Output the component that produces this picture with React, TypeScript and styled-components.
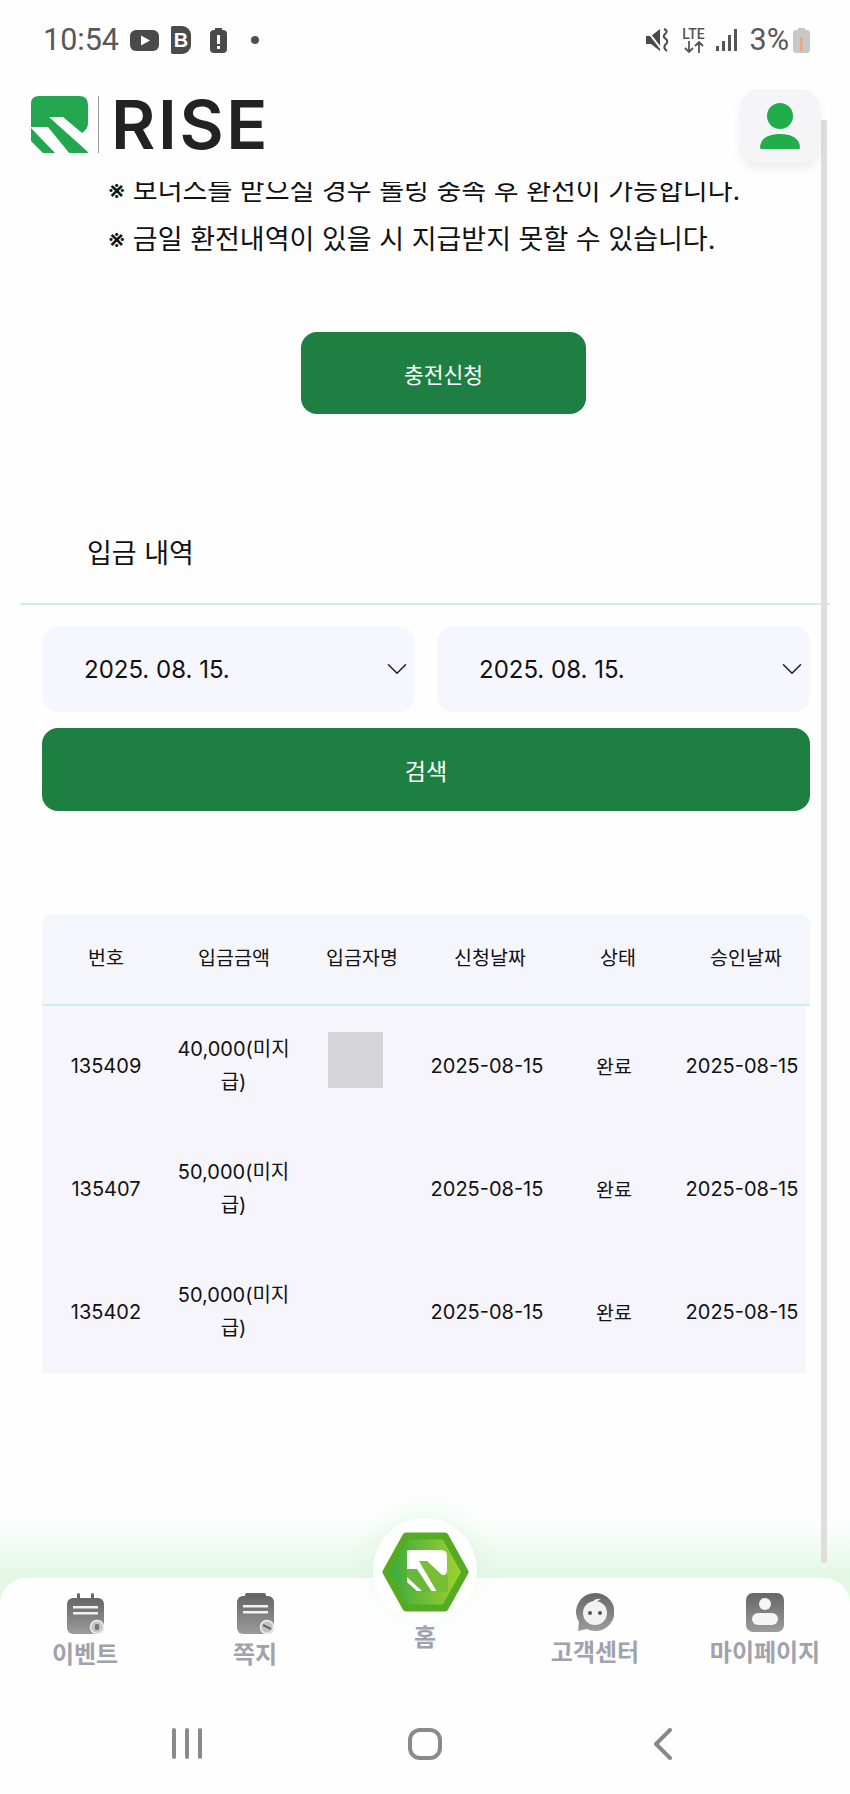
import React from "react";
import styled, { createGlobalStyle } from "styled-components";
import { ChevronDown } from "lucide-react";

const FONT = `"Inter", "Noto Sans CJK KR", sans-serif`;

const GlobalStyle = createGlobalStyle`
	html, body {
		margin: 0;
		padding: 0;
		background: #fefefe;
	}
	* {
		box-sizing: border-box;
	}
`;

const Page = styled.div`
	position: relative;
	width: 850px;
	height: 1794px;
	display: flex;
	flex-direction: column;
	overflow: hidden;
	background: #fefefe;
	font-family: ${FONT};
	color: #111;
`;

const StatusBar = styled.div`
	height: 75px;
	flex: none;
	display: flex;
	align-items: center;
	justify-content: space-between;
	padding: 5px 40px 0 43px;
	color: #555;
`;

const StatusGroup = styled.div`
	display: flex;
	align-items: center;
`;

const StatusText = styled.span<{ $gap?: number }>`
	font-family: "Roboto", sans-serif;
	font-size: 30.5px;
	line-height: 34px;
	color: #585858;
	margin-left: ${(props) => props.$gap || 0}px;
`;

const StatusIcon = styled.svg<{ $gap?: number }>`
	display: block;
	flex: none;
	margin-left: ${(props) => props.$gap || 0}px;
`;

const AppBadge = styled.span`
	width: 20px;
	height: 28px;
	margin-left: 12px;
	display: flex;
	align-items: center;
	justify-content: center;
	background: #4a4a4a;
	border-radius: 2px 9px 9px 2px;
	font-family: "Liberation Sans", sans-serif;
	font-size: 20px;
	font-weight: 700;
	color: #fff;
`;

const LteStack = styled.div`
	width: 24px;
	margin-left: 12px;
	display: flex;
	flex-direction: column;
	align-items: center;
`;

const LteText = styled.span`
	font-family: "Roboto", sans-serif;
	font-size: 14px;
	font-weight: 500;
	line-height: 13px;
	color: #555;
`;

const Header = styled.header`
	height: 107px;
	flex: none;
	display: flex;
	align-items: flex-start;
	justify-content: space-between;
	padding: 14px 30px 0 31px;
	position: relative;
	z-index: 2;
`;

const Logo = styled.div`
	display: flex;
	align-items: center;
	margin-top: 7px;
`;

const LogoDivider = styled.div`
	width: 1px;
	height: 57px;
	margin: 0 12px 0 10px;
	background: #999;
`;

const LogoWord = styled.span`
	font-family: "Inter", sans-serif;
	font-size: 68px;
	line-height: 57px;
	font-weight: 600;
	letter-spacing: 2.6px;
	color: #222;
`;

const ProfileButton = styled.div`
	width: 80px;
	height: 74px;
	display: flex;
	align-items: center;
	justify-content: center;
	background: #f5f5f8;
	border-radius: 20px;
	box-shadow: 0 6px 10px rgba(0, 0, 0, 0.07);
`;

const Main = styled.main`
	flex: 1;
	min-height: 0;
	overflow: hidden;
`;

const Notice = styled.div`
	margin-top: -16px;
	padding-left: 108px;
	font-size: 27px;
	line-height: 49px;
	color: #111;
`;

const ChargeButton = styled.div`
	width: 285px;
	height: 82px;
	margin: 68px 0 0 301px;
	display: flex;
	align-items: center;
	justify-content: center;
	background: #1e7f43;
	border-radius: 16px;
	color: #fff;
	font-size: 21.5px;
`;

const SectionTitle = styled.div`
	margin: 120px 20px 0;
	padding: 0 0 29px 67px;
	border-bottom: 2px solid #cfeee4;
	font-size: 27px;
	line-height: 40px;
	color: #111;
`;

const Filters = styled.div`
	margin: 21px 40px 0 42px;
	display: grid;
	grid-template-columns: 373px 373px;
	justify-content: space-between;
`;

const DateSelect = styled.div`
	height: 86px;
	padding: 0 1px 0 42px;
	display: flex;
	align-items: center;
	justify-content: space-between;
	background: #f6f6fe;
	border-radius: 16px;
	font-size: 24px;
	color: #111;
`;

const SearchButton = styled.div`
	height: 83px;
	margin: 16px 40px 0 42px;
	display: flex;
	align-items: center;
	justify-content: center;
	background: #1e7f43;
	border-radius: 16px;
	color: #fff;
	font-size: 23px;
`;

const Table = styled.div`
	margin: 103px 0 0 42px;
	font-size: 20px;
`;

const TableHead = styled.div`
	width: 768px;
	height: 92px;
	display: grid;
	grid-template-columns: repeat(6, 128px);
	align-items: center;
	justify-items: center;
	padding-bottom: 6px;
	background: #f5f5fc;
	border-bottom: 2px solid #cfeee4;
	border-radius: 10px 10px 0 0;
	font-size: 19.5px;
`;

const TableBody = styled.div`
	width: 764px;
	background: #f5f5fb;
`;

const TableRow = styled.div`
	height: 123px;
	display: grid;
	grid-template-columns: 128px 127px 127px 126px 128px 128px;
	align-items: center;
	justify-items: center;
	text-align: center;
	&:first-child {
		height: 121px;
		padding-bottom: 2px;
	}
`;

const AmountCell = styled.div`
	padding: 0 6px;
	line-height: 33px;
	word-break: break-all;
`;

const StatusCell = styled.span`
	font-size: 19.5px;
`;

const NameMask = styled.div`
	width: 55px;
	height: 56px;
	margin: 0 10px 11px 0;
	background: #d4d4d9;
`;

const Footer = styled.footer`
	flex: none;
	position: relative;
`;

const NavGlow = styled.div`
	height: 84px;
	margin-bottom: -24px;
	background: linear-gradient(to bottom, rgba(228, 248, 230, 0), #e2f8e4 71%);
`;

const NavPanel = styled.nav`
	position: relative;
	height: 122px;
	padding-top: 15px;
	display: grid;
	grid-template-columns: repeat(5, 1fr);
	background: #fefefe;
	border-radius: 26px 26px 0 0;
`;

const NavItem = styled.div`
	display: flex;
	flex-direction: column;
	align-items: center;
`;

const NavLabel = styled.span<{ $top?: number }>`
	margin-top: ${(props) => props.$top ?? 8}px;
	font-size: 24px;
	line-height: 26px;
	font-weight: 700;
	color: #a0a2ad;
	white-space: nowrap;
`;

const HomeCircle = styled.div`
	width: 104px;
	height: 104px;
	margin-top: -75px;
	padding-top: 4px;
	display: flex;
	align-items: center;
	justify-content: center;
	background: #fefefe;
	border-radius: 50%;
	box-shadow: 0 -8px 24px rgba(190, 240, 200, 0.3);
`;

const SystemNav = styled.div`
	height: 94px;
	display: grid;
	grid-template-columns: repeat(3, 238px);
	justify-content: center;
	justify-items: center;
	padding-top: 28px;
`;

const Scrollbar = styled.div`
	position: absolute;
	left: 821px;
	top: 120px;
	width: 6px;
	height: 1443px;
	background: #dedede;
	border-radius: 2px;
	z-index: 1;
`;

const GrayGradient = ({ id }: { id: string }) => (
	<defs>
		<linearGradient id={id} x1="0" y1="0" x2="0" y2="1">
			<stop offset="0" stopColor="#666" />
			<stop offset="1" stopColor="#9c9c9c" />
		</linearGradient>
	</defs>
);

const LogoMark = () => (
	<svg width="57" height="57" viewBox="0 0 57 57">
		<path
			d="M8 0H48Q57 0 57 9V27Q57 33 51 37L57 57H12L0 45V8Q0 0 8 0Z"
			fill="#22a64e"
		/>
		<polygon points="18,21 32,21 51,37 58,37 58,57" fill="#fefefe" />
		<polygon points="-1,31 17,31 39,58 25,58" fill="#fefefe" />
	</svg>
);

const ProfileIcon = () => (
	<svg width="42" height="46" viewBox="0 0 42 46">
		<circle cx="21" cy="13" r="13" fill="#20ad4b" />
		<path d="M1 45C1 35 10 31 21 31S41 35 41 45Q41 46 39 46H3Q1 46 1 45Z" fill="#20ad4b" />
	</svg>
);

const HomeHex = () => (
	<svg width="87" height="82" viewBox="0 0 87 82">
		<defs>
			<linearGradient id="hexFill" x1="0" y1="0" x2="1" y2="0">
				<stop offset="0" stopColor="#35a840" />
				<stop offset="1" stopColor="#a6d42e" />
			</linearGradient>
		</defs>
		<polygon
			points="4,41 24,5 63,5 83,41 63,77 24,77"
			fill="url(#hexFill)"
			stroke="#55ac22"
			strokeWidth="7"
			strokeLinejoin="round"
		/>
		<path
			d="M27 19H59Q65 19 65 25V39Q65 43 61 45L65 60H35L25 51V21Q25 19 27 19Z"
			fill="#fefefe"
		/>
		<polygon points="37,30 45,30 60,44 66,44 66,61 55,61" fill="#78bd36" />
		<polygon points="25,38 35,38 50,61 41,61 25,46" fill="#68b83a" />
	</svg>
);

const CalendarIcon = () => (
	<svg width="37" height="41" viewBox="0 0 37 41">
		<GrayGradient id="calGrad" />
		<rect x="10" y="0" width="3" height="10" rx="1.5" fill="#666" />
		<rect x="24" y="0" width="3" height="10" rx="1.5" fill="#666" />
		<rect x="0" y="5" width="37" height="36" rx="6" fill="url(#calGrad)" />
		<rect x="6" y="13" width="25" height="2.5" fill="#f2f2f2" />
		<rect x="6" y="19" width="25" height="2.5" fill="#f2f2f2" />
		<circle cx="30" cy="34" r="6.5" fill="#c4c4c4" stroke="#eee" strokeWidth="1.5" />
		<rect x="28" y="31" width="4" height="6" rx="1" fill="#777" />
	</svg>
);

const NoteIcon = () => (
	<svg width="37" height="41" viewBox="0 0 37 41">
		<GrayGradient id="noteGrad" />
		<rect x="8" y="0" width="21" height="6" rx="2" fill="#666" />
		<rect x="0" y="3" width="37" height="38" rx="6" fill="url(#noteGrad)" />
		<rect x="6" y="12" width="25" height="2.5" fill="#f2f2f2" />
		<rect x="6" y="18" width="25" height="2.5" fill="#f2f2f2" />
		<circle cx="30" cy="34" r="6.5" fill="#c4c4c4" stroke="#eee" strokeWidth="1.5" />
		<path d="M26 32L34 36" stroke="#666" strokeWidth="2" />
	</svg>
);

const ChatIcon = () => (
	<svg width="38" height="39" viewBox="0 0 38 39">
		<GrayGradient id="chatGrad" />
		<path
			d="M19 0A19 19 0 1 1 11 36L2 38L3 29A19 19 0 0 1 19 0Z"
			fill="url(#chatGrad)"
		/>
		<circle cx="19" cy="20" r="12" fill="#f2f2f2" />
		<path d="M17 9Q19 5 25 6Q20 8 21 11Z" fill="#f2f2f2" />
		<circle cx="14" cy="20" r="2" fill="#555" />
		<circle cx="24" cy="20" r="2" fill="#555" />
	</svg>
);

const MyPageIcon = () => (
	<svg width="38" height="39" viewBox="0 0 38 39">
		<GrayGradient id="myGrad" />
		<rect x="0" y="0" width="38" height="39" rx="7" fill="url(#myGrad)" />
		<circle cx="19" cy="11" r="6" fill="#f5f5f5" />
		<rect x="6" y="20" width="26" height="12" rx="6" fill="#f5f5f5" />
	</svg>
);

const navItems = [
	{ label: "이벤트", icon: <CalendarIcon /> },
	{ label: "쪽지", icon: <NoteIcon /> },
	{ label: "고객센터", icon: <ChatIcon /> },
	{ label: "마이페이지", icon: <MyPageIcon /> },
];

const columns = ["번호", "입금금액", "입금자명", "신청날짜", "상태", "승인날짜"];

const deposits = [
	{ id: 135409, amount: "40,000(미지급)", masked: true },
	{ id: 135407, amount: "50,000(미지급)", masked: false },
	{ id: 135402, amount: "50,000(미지급)", masked: false },
];

export const App = () => {
	return (
		<Page>
			<GlobalStyle />
			<StatusBar>
				<StatusGroup>
					<StatusText>10:54</StatusText>
					<StatusIcon $gap={11} width="29" height="21" viewBox="0 0 29 21">
						<rect width="29" height="21" rx="6" fill="#4a4a4a" />
						<polygon points="11,5.5 20,10.5 11,15.5" fill="#fff" />
					</StatusIcon>
					<AppBadge>B</AppBadge>
					<StatusIcon $gap={19} width="17" height="25" viewBox="0 0 17 25">
						<rect x="5" width="7" height="4" fill="#4a4a4a" />
						<rect y="2" width="17" height="23" rx="4" fill="#4a4a4a" />
						<rect x="7" y="7" width="3" height="9" fill="#fff" />
						<rect x="7" y="18" width="3" height="3" fill="#fff" />
					</StatusIcon>
					<StatusIcon $gap={24} width="8" height="8" viewBox="0 0 8 8">
						<circle cx="4" cy="4" r="4" fill="#4f4f4f" />
					</StatusIcon>
				</StatusGroup>
				<StatusGroup>
					<StatusIcon width="24" height="24" viewBox="0 0 24 24">
						<path d="M0 8H5L14 1V23L5 16H0Z" fill="#4a4a4a" />
						<path d="M0 1L16 22" stroke="#fefefe" strokeWidth="2" />
						<path
							d="M18 1Q23 3 19 6Q16 9 20 11Q23 14 19 17Q17 20 21 23"
							fill="none"
							stroke="#4a4a4a"
							strokeWidth="2"
						/>
					</StatusIcon>
					<LteStack>
						<LteText>LTE</LteText>
						<StatusIcon width="22" height="12" viewBox="0 0 22 12">
							<path
								d="M6 0V11M2 7L6 11L10 7M16 12V1M12 5L16 1L20 5"
								fill="none"
								stroke="#555"
								strokeWidth="1.8"
							/>
						</StatusIcon>
					</LteStack>
					<StatusIcon $gap={10} width="22" height="22" viewBox="0 0 22 22">
						<rect x="0" y="17" width="3" height="5" fill="#555" />
						<rect x="6" y="12" width="3" height="10" fill="#555" />
						<rect x="12" y="6" width="3" height="16" fill="#555" />
						<rect x="18" y="0" width="3" height="22" fill="#555" />
					</StatusIcon>
					<StatusText $gap={12}>3%</StatusText>
					<StatusIcon $gap={4} width="17" height="25" viewBox="0 0 17 25">
						<rect x="5" width="7" height="3" fill="#c5c5c5" />
						<rect y="2" width="17" height="23" rx="3" fill="#c8c8c8" />
						<rect x="7" y="9" width="3" height="14" fill="#e2a98c" />
					</StatusIcon>
				</StatusGroup>
			</StatusBar>

			<Header>
				<Logo>
					<LogoMark />
					<LogoDivider />
					<LogoWord>RISE</LogoWord>
				</Logo>
				<ProfileButton>
					<ProfileIcon />
				</ProfileButton>
			</Header>

			<Main>
				<Notice>
					<div>※ 보너스를 받으실 경우 롤링 충족 후 환전이 가능합니다.</div>
					<div>※ 금일 환전내역이 있을 시 지급받지 못할 수 있습니다.</div>
				</Notice>
				<ChargeButton>충전신청</ChargeButton>
				<SectionTitle>입금 내역</SectionTitle>
				<Filters>
					<DateSelect>
						2025. 08. 15.
						<ChevronDown size={34} strokeWidth={1.1} color="#222" />
					</DateSelect>
					<DateSelect>
						2025. 08. 15.
						<ChevronDown size={34} strokeWidth={1.1} color="#222" />
					</DateSelect>
				</Filters>
				<SearchButton>검색</SearchButton>
				<Table>
					<TableHead>
						{columns.map((column) => (
							<span key={column}>{column}</span>
						))}
					</TableHead>
					<TableBody>
						{deposits.map((row) => (
							<TableRow key={row.id}>
								<span>{row.id}</span>
								<AmountCell>{row.amount}</AmountCell>
								{row.masked ? <NameMask /> : <span />}
								<span>2025-08-15</span>
								<StatusCell>완료</StatusCell>
								<span>2025-08-15</span>
							</TableRow>
						))}
					</TableBody>
				</Table>
			</Main>

			<Footer>
				<NavGlow />
				<NavPanel>
					<NavItem>
						{navItems[0].icon}
						<NavLabel>{navItems[0].label}</NavLabel>
					</NavItem>
					<NavItem>
						{navItems[1].icon}
						<NavLabel>{navItems[1].label}</NavLabel>
					</NavItem>
					<NavItem>
						<HomeCircle>
							<HomeHex />
						</HomeCircle>
						<NavLabel $top={3}>홈</NavLabel>
					</NavItem>
					<NavItem>
						{navItems[2].icon}
						<NavLabel>{navItems[2].label}</NavLabel>
					</NavItem>
					<NavItem>
						{navItems[3].icon}
						<NavLabel>{navItems[3].label}</NavLabel>
					</NavItem>
				</NavPanel>
				<SystemNav>
					<svg width="30" height="32" viewBox="0 0 30 32">
						<rect x="0" y="0" width="4" height="31" rx="2" fill="#8a8a8a" />
						<rect x="13" y="0" width="4" height="31" rx="2" fill="#8a8a8a" />
						<rect x="26" y="0" width="4" height="31" rx="2" fill="#8a8a8a" />
					</svg>
					<svg width="34" height="32" viewBox="0 0 34 32">
						<rect
							x="2"
							y="2"
							width="30"
							height="28"
							rx="10"
							fill="none"
							stroke="#8a8a8a"
							strokeWidth="4"
						/>
					</svg>
					<svg width="20" height="32" viewBox="0 0 20 32">
						<path
							d="M17 2L3 16L17 30"
							fill="none"
							stroke="#8a8a8a"
							strokeWidth="4"
							strokeLinecap="round"
							strokeLinejoin="round"
						/>
					</svg>
				</SystemNav>
			</Footer>
			<Scrollbar />
		</Page>
	);
};
export default App;
